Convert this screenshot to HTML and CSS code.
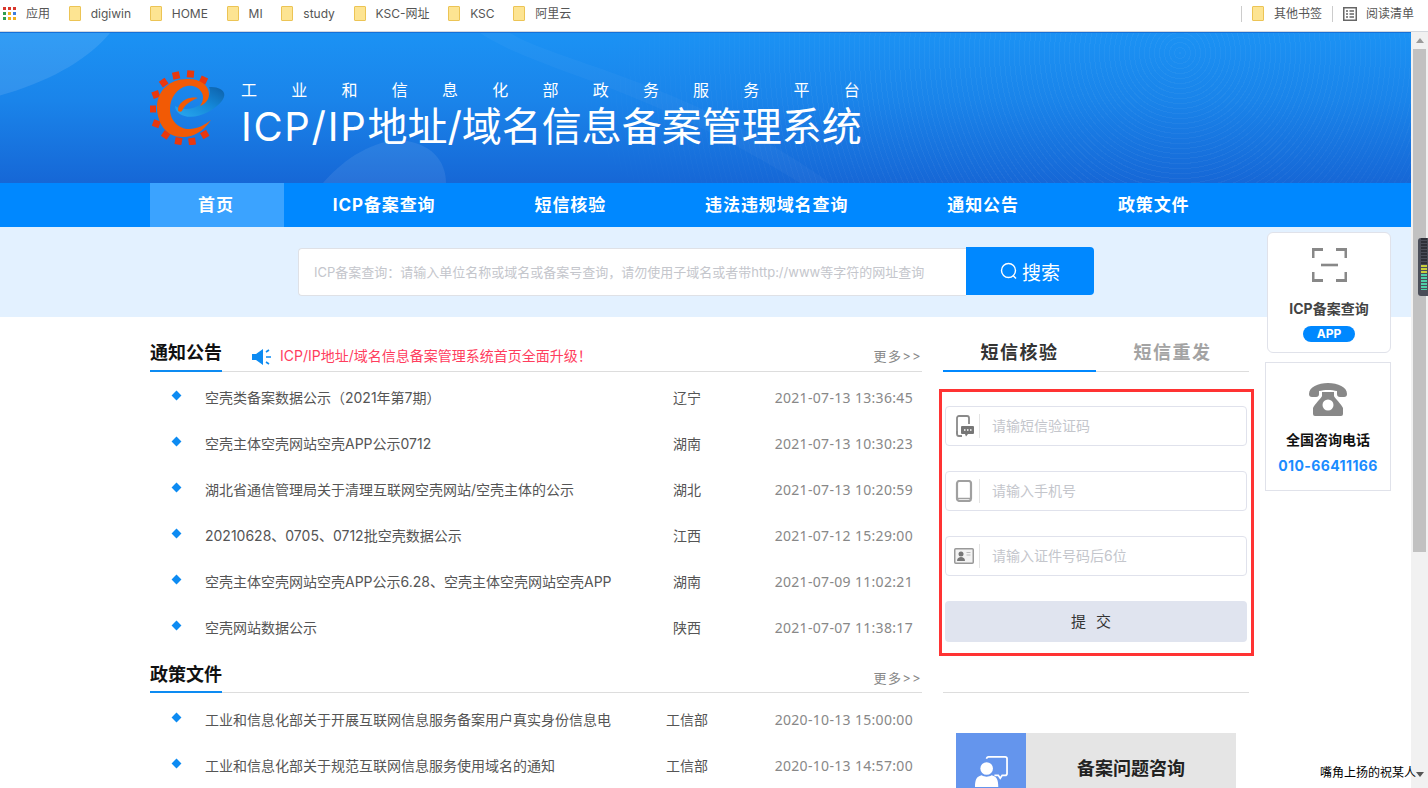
FILE: index.html
```html
<!DOCTYPE html>
<html lang="zh-CN">
<head>
<meta charset="utf-8">
<title>ICP/IP地址/域名信息备案管理系统</title>
<link rel="stylesheet" href="styles.css">
</head>
<body>
<div class="window">
  <header class="bookmarks">
    <div class="bm-group">
      <span class="bm">
        <svg class="apps" viewBox="0 0 13 13"><rect width="3" height="3" fill="#d9372c"/><rect x="5" width="3" height="3" fill="#d9372c"/><rect x="10" width="3" height="3" fill="#d9372c"/><rect y="5" width="3" height="3" fill="#2f9e4f"/><rect x="5" y="5" width="3" height="3" fill="#f2b01e"/><rect x="10" y="5" width="3" height="3" fill="#3b7de0"/><rect y="10" width="3" height="3" fill="#2f9e4f"/><rect x="5" y="10" width="3" height="3" fill="#f2b01e"/><rect x="10" y="10" width="3" height="3" fill="#f2b01e"/></svg>
        应用</span>
      <span class="bm"><i class="folder"></i>digiwin</span>
      <span class="bm"><i class="folder"></i>HOME</span>
      <span class="bm"><i class="folder"></i>MI</span>
      <span class="bm"><i class="folder"></i>study</span>
      <span class="bm"><i class="folder"></i>KSC-网址</span>
      <span class="bm"><i class="folder"></i>KSC</span>
      <span class="bm"><i class="folder"></i>阿里云</span>
    </div>
    <div class="bm-group bm-right">
      <i class="bm-sep"></i>
      <span class="bm"><i class="folder"></i>其他书签</span>
      <i class="bm-sep"></i>
      <span class="bm"><svg class="reader" viewBox="0 0 14 14"><rect x=".75" y=".75" width="12.5" height="12.5" fill="none" stroke="#666" stroke-width="1.5"/><path d="M3 4h2M6.500 4h4.500M3 7h2M6.500 7h4.500M3 10h2M6.500 10h4.500" stroke="#666" stroke-width="1.300"/></svg>阅读清单</span>
    </div>
  </header>

  <div class="viewport">
    <div class="page">
      <section class="hero">
        <svg class="hero-art" viewBox="0 0 1411 151" preserveAspectRatio="none">
          <path d="M0 0H110C85 30 45 50 0 63Z" fill="#fff" opacity=".1"/>
          <path d="M323 151C345 125 375 108 400 108C430 110 446 128 446 151Z" fill="#fff" opacity=".08"/>
          <path d="M480 0C540 40 640 50 800 151H830C690 50 560 30 510 0Z" fill="#fff" opacity=".03"/>
        </svg>
        <svg class="logo" viewBox="10 10 76 75">
          <defs>
            <linearGradient id="swoosh" x1="0" y1="1" x2="1" y2="0"><stop offset="0" stop-color="#29a9f0"/><stop offset=".55" stop-color="#1487d8"/><stop offset="1" stop-color="#0d5fa8"/></linearGradient>
          </defs>
          <g fill="#e8380f">
            <rect x="32.500" y="12" width="7" height="7" transform="rotate(-12 36 15)"/>
            <rect x="47" y="10.500" width="7" height="7" transform="rotate(5 50 14)"/>
            <rect x="60" y="16.500" width="7" height="7" transform="rotate(25 63 20)"/>
            <rect x="20.500" y="19" width="7" height="7" transform="rotate(-35 24 23)"/>
            <rect x="12.500" y="31" width="7" height="7" transform="rotate(-20 16 35)"/>
            <rect x="10" y="45.500" width="6" height="7"/>
            <rect x="13" y="60" width="7" height="7" transform="rotate(20 16 63)"/>
            <rect x="22" y="71" width="7" height="7" transform="rotate(35 25 75)"/>
            <rect x="35" y="77.500" width="7" height="7" transform="rotate(10 38 81)"/>
            <rect x="48.500" y="78" width="7" height="7" transform="rotate(-8 52 81)"/>
            <rect x="61.500" y="71" width="7" height="7" transform="rotate(-30 65 75)"/>
          </g>
          <path d="M35 46C36 58 54 60 68 52C79 46 86 38 84 33C82 28 76 27 69 27C72 34 68 41 58 46C50 50 41 50 35 46Z" fill="url(#swoosh)"/>
          <path d="M71 60C62 73 51 78 42 77C27 77 17 64 17 47C17 30 31 18 49 19C61 19 69 26 69 34C69 40 65 44 60 46C63 42 64 37 62 33C59 27 53 25 47 26C37 28 30 38 30 49C30 61 39 69 49 69C57 69 65 65 71 60Z" fill="#f25a05"/>
          <path d="M38 50C38 44 44 39 50 38C55 37 58 38 58 38C52 40 45 44 42 51C41 52 38 52 38 50Z" fill="#f25a05"/>
        </svg>
        <div class="hero-text">
          <div class="hero-sub"><span>工</span><span>业</span><span>和</span><span>信</span><span>息</span><span>化</span><span>部</span><span>政</span><span>务</span><span>服</span><span>务</span><span>平</span><span>台</span></div>
          <h1 class="hero-title"><span class="hero-latin">ICP/IP</span>地址/域名信息备案管理系统</h1>
        </div>
      </section>

      <nav class="nav">
        <a class="nav-item active">首页</a>
        <a class="nav-item">ICP备案查询</a>
        <a class="nav-item">短信核验</a>
        <a class="nav-item">违法违规域名查询</a>
        <a class="nav-item">通知公告</a>
        <a class="nav-item">政策文件</a>
      </nav>

      <section class="search-band">
        <div class="search-input">ICP备案查询：请输入单位名称或域名或备案号查询，请勿使用子域名或者带http://www等字符的网址查询</div>
        <button class="search-btn">
          <svg class="search-ico" viewBox="0 0 18 18"><circle cx="8.500" cy="8.500" r="7" fill="none" stroke="#fff" stroke-width="1.400"/><path d="M13 13.500l3 3" stroke="#fff" stroke-width="1.400"/></svg>
          搜索
        </button>
      </section>

      <main class="content">
        <div class="col-left">
          <div class="sec-head">
            <h2 class="sec-title">通知公告</h2>
            <svg class="speaker" viewBox="0 0 20 16"><path d="M0 5h4L11 0v16L4 11H0Z" fill="#0d8bf2"/><path d="M14 3l3-2M14 8h5M14 13l3 2" stroke="#0d8bf2" stroke-width="1.600" fill="none"/></svg>
            <span class="sec-notice">ICP/IP地址/域名信息备案管理系统首页全面升级！</span>
            <a class="more">更多&gt;&gt;</a>
          </div>
          <ul class="list">
            <li class="row"><i class="dot"></i><span class="r-title">空壳类备案数据公示（2021年第7期）</span><span class="r-place">辽宁</span><span class="r-date">2021-07-13 13:36:45</span></li>
            <li class="row"><i class="dot"></i><span class="r-title">空壳主体空壳网站空壳APP公示0712</span><span class="r-place">湖南</span><span class="r-date">2021-07-13 10:30:23</span></li>
            <li class="row"><i class="dot"></i><span class="r-title">湖北省通信管理局关于清理互联网空壳网站/空壳主体的公示</span><span class="r-place">湖北</span><span class="r-date">2021-07-13 10:20:59</span></li>
            <li class="row"><i class="dot"></i><span class="r-title">20210628、0705、0712批空壳数据公示</span><span class="r-place">江西</span><span class="r-date">2021-07-12 15:29:00</span></li>
            <li class="row"><i class="dot"></i><span class="r-title">空壳主体空壳网站空壳APP公示6.28、空壳主体空壳网站空壳APP</span><span class="r-place">湖南</span><span class="r-date">2021-07-09 11:02:21</span></li>
            <li class="row"><i class="dot"></i><span class="r-title">空壳网站数据公示</span><span class="r-place">陕西</span><span class="r-date">2021-07-07 11:38:17</span></li>
          </ul>
          <div class="sec-head sec-head-2">
            <h2 class="sec-title">政策文件</h2>
            <a class="more">更多&gt;&gt;</a>
          </div>
          <ul class="list">
            <li class="row"><i class="dot"></i><span class="r-title">工业和信息化部关于开展互联网信息服务备案用户真实身份信息电</span><span class="r-place">工信部</span><span class="r-date">2020-10-13 15:00:00</span></li>
            <li class="row"><i class="dot"></i><span class="r-title">工业和信息化部关于规范互联网信息服务使用域名的通知</span><span class="r-place">工信部</span><span class="r-date">2020-10-13 14:57:00</span></li>
          </ul>
        </div>

        <aside class="col-right">
          <div class="tabs">
            <span class="tab on">短信核验</span>
            <span class="tab">短信重发</span>
          </div>
          <form class="verify">
            <div class="field">
              <svg class="f-ico" viewBox="0 0 20 22"><path d="M3 19V3a2 2 0 0 1 2-2h8a2 2 0 0 1 2 2v6" fill="none" stroke="#8a8a8a" stroke-width="1.800"/><path d="M3 16v3a2 2 0 0 0 2 2h3" fill="none" stroke="#8a8a8a" stroke-width="1.800"/><path d="M8 11h11a1 1 0 0 1 1 1v6a1 1 0 0 1-1 1h-5l-2 2.500-1-2.500H8a1 1 0 0 1-1-1v-6a1 1 0 0 1 1-1Z" fill="#777"/><path d="M10 15h1.500M13 15h1.500M16 15h1.500" stroke="#fff" stroke-width="1.600"/></svg>
              <span class="f-text">请输短信验证码</span>
            </div>
            <div class="field">
              <svg class="f-ico" viewBox="0 0 20 22"><rect x="3" y="1" width="14" height="20" rx="2.500" fill="none" stroke="#a0a0a0" stroke-width="2.200"/><path d="M4 18.500h12" stroke="#a0a0a0" stroke-width="1.500"/></svg>
              <span class="f-text">请输入手机号</span>
            </div>
            <div class="field">
              <svg class="f-ico f-ico-wide" viewBox="0 0 20 16"><rect x=".75" y=".75" width="18.500" height="14.500" rx="1" fill="#f3f3f3" stroke="#999" stroke-width="1.500"/><circle cx="7" cy="6" r="2.500" fill="#777"/><path d="M3 13c0-3 2-4 4-4s4 1 4 4Z" fill="#777"/><path d="M12.500 4.500h4M12.500 7h4" stroke="#bbb" stroke-width="1.200"/></svg>
              <span class="f-text">请输入证件号码后6位</span>
            </div>
            <div class="submit">提交</div>
          </form>
          <div class="rule"></div>
          <div class="consult">
            <div class="c-ico">
              <svg viewBox="0 0 34 36"><path d="M12 7a2 2 0 0 1 2-2h17a2 2 0 0 1 2 2v15a2 2 0 0 1-2 2h-3l-2 3-2-3h-4" fill="none" stroke="#fff" stroke-width="1.800"/><circle cx="12" cy="17" r="6.500" fill="#fff"/><path d="M0 36c0-8 2-11 7-12 3 2 7 2 10 0 5 1 7 4 7 12Z" fill="#fff"/></svg>
            </div>
            <div class="c-text">备案问题咨询</div>
          </div>
        </aside>
      </main>
    </div>
    <div class="scrollbar">
      <i class="sb-up"></i>
      <i class="sb-thumb"></i>
      <i class="sb-down"></i>
    </div>

    <div class="float-card qr-card">
      <svg class="scan" viewBox="0 0 35 34"><path d="M1 10V1.500h10M24 1.500h10V10M1 24v8.500h10M24 32.500h10V24" fill="none" stroke="#888" stroke-width="3"/><path d="M9 17h17" stroke="#888" stroke-width="2.600"/></svg>
      <div class="qr-title">ICP备案查询</div>
      <div class="pill">APP</div>
    </div>
    <div class="float-card tel-card">
      <svg class="tel" viewBox="0 0 38 33"><path d="M0 11C0 4 9 0 19 0s19 4 19 11c0 2-1 3-3 3h-4c-2 0-3-1-3-3V8c-5-1.500-13-1.500-18 0v3c0 2-1 3-3 3H3c-2 0-3-1-3-3Z" fill="#888"/><path d="M13 9h12v4c0 1 8 9 9 12v6a2 2 0 0 1-2 2H6a2 2 0 0 1-2-2v-6c1-3 9-11 9-12Z" fill="#888"/><circle cx="19" cy="22" r="5.500" fill="#fff"/></svg>
      <div class="tel-title">全国咨询电话</div>
      <div class="tel-num">010-66411166</div>
    </div>
    <div class="meter"></div>
    <div class="watermark">嘴角上扬的祝某人</div>
  </div>
</div>
</body>
</html>
```

FILE: styles.css
```css
* { box-sizing: border-box; }
html, body { margin: 0; padding: 0; height: 100%; overflow: hidden; background: #fff; }
body { font-family: "Inter", "Noto Sans CJK SC", sans-serif; font-size: 14px; color: #555; }
ul { list-style: none; margin: 0; padding: 0; }
h1, h2 { margin: 0; font-weight: normal; }
i { display: block; font-style: normal; }

.window { width: 1428px; height: 788px; display: flex; flex-direction: column; overflow: hidden; }

/* bookmarks */
.bookmarks { height: 32px; flex: none; display: flex; justify-content: space-between; align-items: center; padding: 0 14px 4px 3px; border-bottom: 1px solid #d4d8de; background: #fff; font-size: 12px; color: #555; }
.bm-group { display: flex; align-items: center; gap: 18.7px; }
.bm-right { gap: 10px; }
.bm { display: flex; align-items: center; line-height: 16px; white-space: nowrap; }
.apps { width: 13px; height: 13px; margin-right: 10px; }
.folder { width: 12px; height: 15px; margin-right: 10px; background: #fde492; border: 1px solid #ecc455; border-radius: 1px; }
.reader { width: 14px; height: 14px; margin-right: 9px; }
.bm-sep { width: 1px; height: 16px; background: #ccc; }

/* frame */
.viewport { flex: 1; min-height: 0; display: flex; position: relative; overflow: hidden; }
.page { width: 1411px; flex: none; overflow: hidden; }
.scrollbar { width: 17px; flex: none; background: #f1f1f1; display: flex; flex-direction: column; align-items: center; padding-top: 6px; }
.sb-up { width: 0; height: 0; border: 4px solid transparent; border-top: 0; border-bottom: 5px solid #9a9a9a; }
.sb-thumb { width: 13px; height: 503px; margin-top: 6px; background: #c1c1c1; }
.sb-down { width: 0; height: 0; margin-top: 220px; border: 4px solid transparent; border-bottom: 0; border-top: 5px solid #555; }

/* hero */
.hero { height: 151px; position: relative; overflow: hidden; display: flex; align-items: flex-start; padding: 38px 0 0 150px; border-top: 1px solid #1570d8; background: linear-gradient(180deg, #1b92f4 0%, #1a84ea 45%, #1667d6 100%); }
.hero::after { content: ""; position: absolute; inset: 0; background: repeating-radial-gradient(circle at 1180px 20px, rgba(255,255,255,.045) 0 1px, transparent 1px 5px); -webkit-mask-image: radial-gradient(ellipse 560px 200px at 1100px 70px, #000 40%, transparent 100%); mask-image: radial-gradient(ellipse 560px 200px at 1100px 70px, #000 40%, transparent 100%); }
.hero-art { position: absolute; left: 0; top: 0; width: 100%; height: 100%; }
.logo { position: relative; z-index: 1; width: 76px; height: 75px; flex: none; margin-top: -1px; }
.hero-text { position: relative; z-index: 1; margin-left: 15px; width: 619px; padding-top: 9px; }
.hero-sub { display: flex; justify-content: space-between; font-size: 16px; line-height: 20px; color: #fff; }
.hero-title { margin-top: 1px; font-size: 40px; line-height: 52px; color: #fff; white-space: nowrap; font-weight: 400; }
.hero-latin { letter-spacing: 1.7px; }

/* nav */
.nav { height: 44px; display: flex; padding-left: 150px; background: #0088ff; }
.nav-item { padding: 0 50px 0 49px; line-height: 44px; font-size: 17px; font-weight: 700; letter-spacing: .9px; color: #fff; white-space: nowrap; }
.nav-item.active { padding: 0 50px 0 48px; background: #3ba3ff; }

/* search */
.search-band { height: 90px; padding: 20px 0 0 298px; display: flex; align-items: flex-start; background: #e3f1ff; }
.search-input { width: 668px; height: 48px; margin-top: 1px; padding-left: 15px; line-height: 47px; font-size: 13px; color: #c4c6cc; background: #fff; border: 1px solid #dfe1e6; border-right: 0; border-radius: 4px 0 0 4px; white-space: nowrap; overflow: hidden; }
.search-btn { width: 128px; height: 48px; display: flex; align-items: center; justify-content: center; gap: 4px; padding: 0; border: 0; border-radius: 0 4px 4px 0; background: #0088ff; color: #fff; font: 19px "Inter", "Noto Sans CJK SC", sans-serif; }
.search-ico { width: 18px; height: 18px; }

/* content */
.content { display: flex; padding: 18px 0 0 150px; }
.col-left { width: 772px; flex: none; }
.col-right { width: 315px; flex: none; margin-left: 17px; }

.sec-head { height: 37px; display: flex; align-items: flex-start; border-bottom: 1px solid #ddd; margin-bottom: 3px; }
.sec-head-2 { margin-top: 5px; margin-bottom: 4px; }
.sec-title { height: 37px; padding-top: 5px; font-size: 18px; line-height: 26px; font-weight: 700; color: #111; border-bottom: 2px solid #0d8bf2; white-space: nowrap; }
.sec-head-2 .sec-title { padding-top: 6px; }
.speaker { width: 20px; height: 16px; margin: 14px 0 0 30px; flex: none; }
.sec-notice { margin: 11px 0 0 8px; font-size: 14px; line-height: 20px; color: #ff3d5e; white-space: nowrap; }
.more { margin: 12px 0 0 auto; font-size: 13px; line-height: 18px; color: #888; letter-spacing: 1.300px; white-space: nowrap; }
.sec-head-2 .more { margin-top: 13px; }

.row { height: 46px; display: grid; grid-template-columns: 55px 455px 54px 208px; align-items: center; line-height: 20px; }
.dot { width: 7px; height: 7px; margin: -6px 0 0 23px; background: #0d8bf2; transform: rotate(45deg); }
.r-title { white-space: nowrap; overflow: hidden; color: #555; }
.r-place { text-align: center; white-space: nowrap; }
.r-date { text-align: right; padding-right: 9px; font-family: "Noto Sans", "Noto Sans CJK SC", sans-serif; letter-spacing: .32px; color: #888; white-space: nowrap; }

/* right */
.tabs { height: 37px; margin: 0 5px 0 4px; display: flex; border-bottom: 1px solid #ddd; }
.tab { width: 153px; height: 37px; padding-top: 5px; text-align: center; font-size: 18px; line-height: 26px; font-weight: 700; letter-spacing: 1.500px; color: #a3a3a3; }
.tab.on { color: #333; border-bottom: 2px solid #0088ff; }

.verify { height: 267px; margin-top: 17px; padding: 14px 4px 0 3px; border: 3px solid #ff3333; display: flex; flex-direction: column; gap: 25px; }
.field { height: 40px; display: flex; align-items: center; border: 1px solid #e0e2ec; border-radius: 4px; }
.f-ico { width: 20px; height: 22px; margin-left: 8px; flex: none; }
.f-ico-wide { height: 16px; }
.f-text { margin-left: 5px; padding-left: 12px; height: 24px; line-height: 24px; border-left: 1px solid #e4e4e4; font-size: 14px; color: #c4c6cc; white-space: nowrap; }
.submit { height: 41px; line-height: 41px; text-align: center; font-size: 15px; letter-spacing: 10px; color: #333; background: #e0e4ef; border-radius: 4px; }

.rule { height: 1px; margin: 36px 5px 0 4px; background: #ddd; }
.consult { width: 280px; height: 70px; margin: 40px 0 0 17px; display: flex; background: #e5e5e5; }
.c-ico { width: 70px; flex: none; padding: 19px 0 0 19px; background: #6495ed; }
.c-ico svg { display: block; width: 33px; height: 35px; }
.c-text { flex: 1; padding-top: 23px; text-align: center; font-size: 18px; line-height: 26px; font-weight: 700; color: #222; }

/* floats */
.float-card { position: absolute; background: #fff; border: 1px solid #e0e2ea; display: flex; flex-direction: column; align-items: center; }
.qr-card { left: 1267px; top: 200px; width: 124px; height: 121px; padding-top: 15px; border-radius: 6px; }
.scan { width: 35px; height: 34px; flex: none; }
.qr-title { margin-top: 17px; font-size: 14px; line-height: 20px; font-weight: 700; color: #444; white-space: nowrap; }
.pill { width: 52px; height: 16px; margin-top: 7px; border-radius: 8px; background: #0088ff; color: #fff; font-size: 12px; line-height: 16px; font-weight: 700; text-align: center; }
.tel-card { left: 1265px; top: 330px; width: 126px; height: 129px; padding-top: 20px; }
.tel { width: 38px; height: 33px; flex: none; }
.tel-title { margin-top: 14px; font-size: 14px; line-height: 20px; font-weight: 700; color: #111; white-space: nowrap; }
.tel-num { margin-top: 6px; font-size: 14px; line-height: 20px; font-weight: 700; letter-spacing: .4px; color: #1a8cff; white-space: nowrap; }
.meter { position: absolute; left: 1418px; top: 206px; width: 10px; height: 58px; border-radius: 3px 0 0 3px; background-color: #4a4d58; background-image: repeating-linear-gradient(180deg, transparent 0 2px, #4a4d58 2px 3px), linear-gradient(180deg, #2e3038 0 45%, #c9cf3c 45% 62%, #4fd0a8 62% 90%, #4a4d58 90%); background-size: 100% 100%, 6px 100%; background-position: 0 0, 3px 0; background-repeat: no-repeat; }
.watermark { position: absolute; left: 1320px; bottom: 7px; font-size: 12px; line-height: 16px; color: #000; white-space: nowrap; }
```
